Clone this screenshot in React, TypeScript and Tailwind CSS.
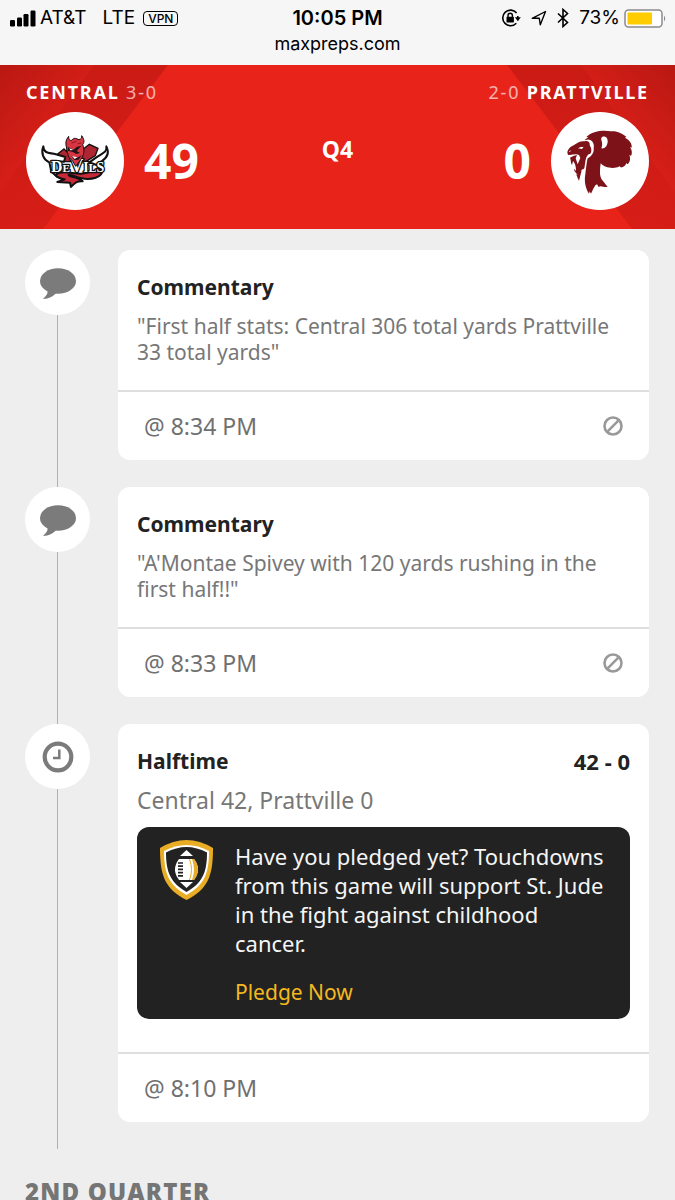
import type { ReactNode } from "react"

type Play = {
  id: number
  kind: "commentary" | "clock"
  title: string
  text: string
  time: string
  score?: string
  flaggable?: boolean
  promo?: boolean
}

const plays: Play[] = [
  {
    id: 1,
    kind: "commentary",
    title: "Commentary",
    text: '"First half stats: Central 306 total yards Prattville 33 total yards"',
    time: "8:34 PM",
    flaggable: true,
  },
  {
    id: 2,
    kind: "commentary",
    title: "Commentary",
    text: '"A\'Montae Spivey with 120 yards rushing in the first half!!"',
    time: "8:33 PM",
    flaggable: true,
  },
  {
    id: 3,
    kind: "clock",
    title: "Halftime",
    text: "Central 42, Prattville 0",
    time: "8:10 PM",
    score: "42 - 0",
    promo: true,
  },
]

function StatusBar() {
  return (
    <div className="bg-[#f6f6f6] px-2 pt-1 pb-2 font-['Inter',sans-serif] text-black">
      <div className="grid h-[26px] grid-cols-[1fr_auto_1fr] items-center text-[19px]">
        <div className="flex items-center">
          <svg className="mr-1 h-[17px] w-7" viewBox="0 0 28 17" aria-hidden="true">
            <rect x="2" y="10" width="5" height="6.5" rx="1.2" />
            <rect x="9" y="7.5" width="5" height="9" rx="1.2" />
            <rect x="15.5" y="4" width="5" height="12.5" rx="1.2" />
            <rect x="22.5" y="0.5" width="5" height="16" rx="1.2" />
          </svg>
          <span>AT&amp;T</span>
          <span className="ml-4">LTE</span>
          <span className="ml-2 rounded border border-black px-1 text-xs leading-[13px] font-medium">VPN</span>
        </div>
        <span className="text-xl font-semibold">10:05 PM</span>
        <div className="flex items-center justify-end">
          <svg className="mr-2.5 size-5" viewBox="0 0 20 20" fill="none" stroke="#000" aria-hidden="true">
            <path d="M15.6 5A7.800 7.800 0 1 0 15.300 15.200" strokeWidth="1.6" />
            <path d="M16.8 8v3" strokeWidth="1.6" />
            <path d="M13.9 9.300h5.900l-2.900 4z" fill="#000" stroke="none" />
            <rect x="5.500" y="8.800" width="7.400" height="5.600" rx=".6" fill="#000" stroke="none" />
            <path d="M7 9.500V7.400a2.200 2.200 0 0 1 4.400 0v2.100" strokeWidth="1.4" />
          </svg>
          <svg className="mr-2.5 size-4" viewBox="0 0 16 16" fill="none" stroke="#000" aria-hidden="true">
            <path d="M1.2 8.300L14.500 1.500 9.300 14.800 8.300 8.300z" strokeWidth="1.4" strokeLinejoin="round" />
          </svg>
          <svg className="mr-2.5 h-5 w-3" viewBox="0 0 12 20" fill="none" stroke="#000" aria-hidden="true">
            <path d="M1 5.500l9.500 9L6 18.500v-17l4.500 4L1 14.500" strokeWidth="1.6" />
          </svg>
          <span>73%</span>
          <svg className="ml-1 h-[19px] w-[43px]" viewBox="0 0 43 19" aria-hidden="true">
            <rect x="1" y="1" width="37" height="17" rx="3.500" fill="#fff" stroke="#8b8b90" strokeWidth="1.5" />
            <rect x="3.500" y="3.500" width="24.500" height="12" rx="1" fill="#ffcc00" />
            <path d="M40 6.500q2.500 3 0 6z" fill="#8b8b90" />
          </svg>
        </div>
      </div>
      <div className="text-center text-lg leading-[27px]">maxpreps.com</div>
    </div>
  )
}

function DevilsLogo() {
  return (
    <svg className="h-16 w-[78px]" viewBox="0 0 234 192" role="img" aria-label="Central Devils">
      {/* Cape */}
      <path
        d="M64 76L84 60 92 68 98 52 112 58 132 68 160 46 186 58 178 80 150 98 80 98z"
        fill="#ae2631"
        stroke="#111"
        strokeWidth="4"
      />
      {/* Horns */}
      <path
        d="M22 52C22 70 34 72 54 74L88 84 84 98 62 96C70 110 72 126 62 142L46 128 40 100C22 92 14 72 22 52z"
        fill="#fff"
        stroke="#111"
        strokeWidth="6"
        strokeLinejoin="round"
      />
      <path
        d="M211 52C214 70 200 72 180 86L160 100 182 108 198 96C216 84 220 70 211 52z"
        fill="#fff"
        stroke="#111"
        strokeWidth="6"
        strokeLinejoin="round"
      />
      {/* Tail */}
      <path
        d="M58 138C76 120 112 136 136 134C166 132 180 118 198 122C202 146 164 154 134 147C116 142 104 136 98 138C98 145 122 140 140 157C124 156 116 160 105 174L102 161 64 159 86 151C72 149 64 145 58 138z"
        fill="#c82937"
        stroke="#111"
        strokeWidth="6"
        strokeLinejoin="round"
      />
      <text
        x="45"
        y="130"
        fontFamily="Liberation Serif, serif"
        fontWeight="700"
        fill="#fff"
        stroke="#111"
        strokeWidth="8"
        strokeLinejoin="round"
        paintOrder="stroke"
      >
        <tspan fontSize="48">D</tspan>
        <tspan fontSize="34">E</tspan>
        <tspan fontSize="54">V</tspan>
        <tspan fontSize="42">I</tspan>
        <tspan fontSize="36">L</tspan>
        <tspan fontSize="42">S</tspan>
      </text>
      {/* Face */}
      <path
        d="M90 48C88 34 94 28 98 22C98 32 101 35 107 34C115 24 120 29 129 32C137 29 138 26 137 20C145 31 146 39 140 47C147 61 144 80 134 92L119 112 110 96 98 84 94 70z"
        fill="#d73541"
        stroke="#111"
        strokeWidth="3"
      />
      <path
        d="M95 54L113 62 122 54 136 50 122 66 132 72 121 75 112 70 96 65zM106 81L124 86 137 78 128 92 115 93z"
        fill="#241316"
      />
      <path d="M100 58l12 5-9 1zM108 81l16 4-8 5z" fill="#fff" />
      <path d="M106 42l16-5M125 44l11-2" stroke="#8f1621" strokeWidth="3" />
    </svg>
  )
}

function LionLogo() {
  return (
    <svg className="h-20 w-[82px]" viewBox="0 0 246 240" role="img" aria-label="Prattville Lions">
      <g fill="#7d1218">
        <path d="M76 58L88 48 82 48C100 30 132 27 156 31C174 29 190 38 202 47L198 50C212 57 220 69 218 80L213 78C220 89 220 98 216 105L211 101C216 116 212 124 205 130L202 126C199 136 191 140 185 139L182 136C164 146 136 140 125 127C122 150 121 170 132 180L146 198C134 200 126 192 119 198L114 190C106 193 102 207 96 218L92 211 90 218C80 204 75 181 79 160C81 142 83 124 86 112C98 106 106 94 104 82C108 66 96 53 84 56z" />
        <path d="M50 69C58 62 68 59 78 61C87 58 94 66 92 73C98 82 99 92 94 98C86 99 82 106 80 116L76 142C72 148 67 142 67 152L60 179C54 170 55 163 50 160L56 162C49 153 44 148 45 143L51 150C51 137 48 125 42 120L39 132C34 124 37 118 33 110C42 107 47 102 54 103L50 112 56 130 64 111 60 102C49 96 38 104 27 101C23 95 26 87 31 82C33 77 42 75 50 69z" />
      </g>
      <path d="M130 47C140 44 147 51 146 63C144 78 136 84 127 82C131 73 130 65 127 57C126 51 128 48 130 47z" fill="#fff" />
      <path d="M57 82C63 77 70 78 74 77L69 84zM30 91l6-3-3 5z" fill="#fff" />
    </svg>
  )
}

function CommentIcon() {
  return (
    <svg className="h-8 w-9" viewBox="0 0 36 32" fill="#7b7b7b" aria-hidden="true">
      <ellipse cx="18" cy="14" rx="18" ry="12.800" />
      <path d="M7 22C9 26 6 29 3 32C9 32 14 29 17 25z" />
    </svg>
  )
}

function ClockIcon() {
  return (
    <svg className="size-8" viewBox="0 0 32 32" fill="none" stroke="#7b7b7b" aria-hidden="true">
      <circle cx="16" cy="16" r="13.300" strokeWidth="4.200" />
      <path d="M17.300 8.500V17H11" strokeWidth="2.500" />
    </svg>
  )
}

function ShieldIcon() {
  return (
    <svg className="h-[60px] w-[53px] shrink-0" viewBox="0 0 53 60" aria-hidden="true">
      <path d="M0 8Q26.500-8 53 8C53 36 48 49 26.500 60C5 49 0 36 0 8z" fill="#e9ad25" />
      <path d="M4 11Q26.500-1 49 11C49 34 44 45 26.500 55C9 45 4 34 4 11z" fill="#fff" />
      <path d="M6 12.500Q26.500 1.500 47 12.500C47 33 42 43 26.500 52C11 43 6 33 6 12.500z" fill="#222" />
      <path d="M26.500 10L33 16H20zM26.500 48L33 42H20z" fill="#fff" />
      <path d="M19 19H34Q42 29.500 34 40H19Q11 29.500 19 19z" fill="#fff" />
      <path d="M32 19H34Q42 29.500 34 40H32Q36 29.500 32 19z" fill="#e9ad25" />
      <path d="M29.500 19Q33.500 29.500 29.500 40" fill="none" stroke="#e9ad25" />
      <path d="M18 23h5M18 26.200h5M18 29.400h5M18 32.600h5M18 35.800h5" stroke="#222" strokeWidth="1.7" />
    </svg>
  )
}

function Stripes() {
  return (
    <svg className="h-full w-[168px]" viewBox="0 0 168 164" preserveAspectRatio="none" aria-hidden="true">
      <defs>
        <linearGradient id="corner" x1="0" y1="0" x2="0.600" y2="0.700">
          <stop offset="0" stopColor="#ba1812" />
          <stop offset="1" stopColor="#dc2019" />
        </linearGradient>
        <linearGradient id="band" x1="0.300" y1="0" x2="0.600" y2="1">
          <stop offset="0" stopColor="#c91a14" />
          <stop offset="1" stopColor="#d81e17" />
        </linearGradient>
      </defs>
      <path d="M0 0H168L43 164H0z" fill="url(#band)" />
      <path d="M0 0H94L0 127z" fill="url(#corner)" />
    </svg>
  )
}

function TeamBadge({ children }: { children: ReactNode }) {
  return (
    <div className="flex size-[98px] items-center justify-center rounded-full bg-white">{children}</div>
  )
}

function ScoreHeader() {
  return (
    <header className="relative bg-[#e7231a] px-[26px] pt-[15px] pb-[19px] text-white">
      <div className="absolute inset-y-0 left-0">
        <Stripes />
      </div>
      <div className="absolute inset-y-0 right-0 -scale-x-100">
        <Stripes />
      </div>
      <div className="relative">
        <div className="flex justify-between text-lg leading-6 tracking-widest">
          <div>
            <span className="font-bold">CENTRAL</span> <span className="text-white/65">3-0</span>
          </div>
          <div>
            <span className="text-white/65">2-0</span> <span className="font-bold">PRATTVILLE</span>
          </div>
        </div>
        <div className="mt-2 grid grid-cols-[1fr_auto_1fr] items-center">
          <div className="flex items-center gap-5">
            <TeamBadge>
              <DevilsLogo />
            </TeamBadge>
            <span className="text-5xl leading-none font-bold">49</span>
          </div>
          <span className="mb-6 text-[23px] leading-7 font-bold">Q4</span>
          <div className="flex items-center justify-end gap-5">
            <span className="text-5xl leading-none font-bold">0</span>
            <TeamBadge>
              <LionLogo />
            </TeamBadge>
          </div>
        </div>
      </div>
    </header>
  )
}

function PledgePromo() {
  return (
    <div className="mt-3.5 mb-2 flex rounded-xl bg-[#222] pt-[13px] pr-[18px] pb-3 pl-[23px] text-[22px] leading-[29px] text-[#f5f5f5]">
      <ShieldIcon />
      <div className="ml-[22px] pt-0.5">
        <p>Have you pledged yet? Touchdowns from this game will support St. Jude in the fight against childhood cancer.</p>
        <a href="#pledge" className="mt-5 inline-block text-[21px] text-[#f4b81f]">
          Pledge Now
        </a>
      </div>
    </div>
  )
}

function PlayItem({ play }: { play: Play }) {
  return (
    <li className="flex gap-7">
      {/* Timeline rail */}
      <div className="flex w-[65px] shrink-0 flex-col items-center">
        <div className="flex size-[65px] items-center justify-center rounded-full bg-white">
          {play.kind === "commentary" ? <CommentIcon /> : <ClockIcon />}
        </div>
        <div className="w-px grow bg-[#b0b0b0]" />
      </div>

      <article className="mb-[27px] min-w-0 grow rounded-xl bg-white">
        <div className="px-[19px] pt-[23px] pb-[25px]">
          <div className="flex justify-between text-[21px] leading-7 font-bold text-[#222]">
            <h2>{play.title}</h2>
            {play.score && <span className="text-[22px]">{play.score}</span>}
          </div>
          <p className={`mt-3 leading-[26px] text-[#777] ${play.promo ? "text-[23px]" : "text-[21px]"}`}>{play.text}</p>
          {play.promo && <PledgePromo />}
        </div>
        <div className="flex h-[70px] items-center justify-between border-t-2 border-[#dfdfdf] px-[26px] text-[23px] text-[#707070]">
          <time>@ {play.time}</time>
          {play.flaggable && (
            <button type="button" aria-label="Report this play">
              <svg className="size-5" viewBox="0 0 20 20" fill="none" stroke="#999" strokeWidth="2.600" aria-hidden="true">
                <circle cx="10" cy="10" r="8.500" />
                <path d="M4.200 15.800L15.800 4.200" />
              </svg>
            </button>
          )}
        </div>
      </article>
    </li>
  )
}

export default function App() {
  return (
    <div className="flex h-screen flex-col overflow-hidden bg-[#eee] font-['Noto_Sans',sans-serif]">
      <StatusBar />
      <ScoreHeader />
      <main className="pt-[21px] pr-[26px] pl-[25px]">
        <ul>
          {plays.map((play) => (
            <PlayItem key={play.id} play={play} />
          ))}
        </ul>
        <h2 className="mt-[27px] text-2xl leading-8 font-black tracking-wider text-[#757575]">2ND QUARTER</h2>
      </main>
    </div>
  )
}
